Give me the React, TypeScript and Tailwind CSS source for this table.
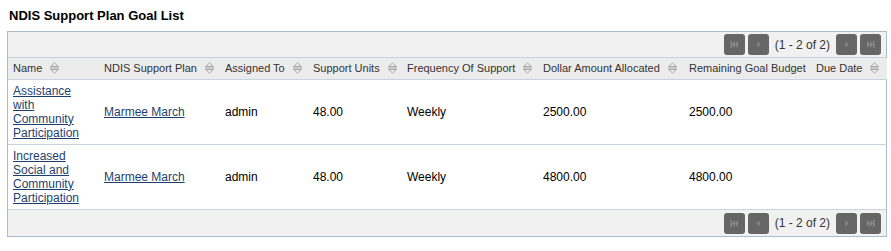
import React from 'react';

const font = { fontFamily: '"Liberation Sans", Arial, sans-serif' };

function SortIcon() {
  return (
    <svg width="11" height="12" viewBox="0 0 11 12" className="shrink-0">
      <path d="M1.5 4.5 L5.5 1 L9.5 4.5 Z" fill="none" stroke="#aaa" strokeWidth="1" />
      <line x1="1" y1="6" x2="10" y2="6" stroke="#aaa" strokeWidth="1" />
      <path d="M1.5 7.5 L5.5 11 L9.5 7.5 Z" fill="none" stroke="#aaa" strokeWidth="1" />
    </svg>
  );
}

function PageBtn({ kind }: { kind: 'first' | 'prev' | 'next' | 'last' }) {
  return (
    <div className="w-[21px] h-[21px] rounded-[3px] bg-[#666666] flex items-center justify-center">
      <svg width="9" height="7" viewBox="0 0 9 7">
        {kind === 'first' && (
          <g fill="#8a8a8a">
            <rect x="0.5" y="0" width="1.5" height="7" />
            <path d="M2 3.5 L5 0 L5 7 Z" />
            <path d="M5 3.5 L8 0 L8 7 Z" />
          </g>
        )}
        {kind === 'prev' && <path d="M2.5 3.5 L5.5 0.5 L5.5 6.5 Z" fill="#8a8a8a" />}
        {kind === 'next' && <path d="M6.5 3.5 L3.5 0.5 L3.5 6.5 Z" fill="#8a8a8a" />}
        {kind === 'last' && (
          <g fill="#8a8a8a">
            <path d="M1 0 L4 3.5 L1 7 Z" />
            <path d="M4 0 L7 3.5 L4 7 Z" />
            <rect x="7" y="0" width="1.5" height="7" />
          </g>
        )}
      </svg>
    </div>
  );
}

function Paginator({ bottom }: { bottom?: boolean }) {
  return (
    <div
      className={`bg-[#f1f1f1] flex items-center justify-end gap-[3px] pr-[5px] ${
        bottom ? 'border-t border-[#c7d3de] h-[27px]' : 'border-b border-[#c7d3de] h-[26px]'
      }`}
    >
      <PageBtn kind="first" />
      <PageBtn kind="prev" />
      <span className="text-[12px] text-[#333] px-[3px]">(1 - 2 of 2)</span>
      <PageBtn kind="next" />
      <PageBtn kind="last" />
    </div>
  );
}

const columns = [
  { label: 'Name', width: 'w-[91px]', sort: true },
  { label: 'NDIS Support Plan', width: 'w-[121px]', sort: true },
  { label: 'Assigned To', width: 'w-[88px]', sort: true },
  { label: 'Support Units', width: 'w-[94px]', sort: true },
  { label: 'Frequency Of Support', width: 'w-[136px]', sort: true },
  { label: 'Dollar Amount Allocated', width: 'w-[146px]', sort: true },
  { label: 'Remaining Goal Budget', width: 'w-[127px]', sort: false },
  { label: 'Due Date', width: 'w-[76px]', sort: true },
];

const rows = [
  {
    name: ['Assistance', 'with', 'Community', 'Participation'],
    amount: '2500.00',
  },
  {
    name: ['Increased', 'Social and', 'Community', 'Participation'],
    amount: '4800.00',
  },
];

export default function App() {
  return (
    <div className="bg-white w-[891px] h-[251px] text-black" style={font}>
      <h1 className="text-[13px] font-bold leading-[16px] pl-[9px] pt-[8px] pb-[7px]">
        NDIS Support Plan Goal List
      </h1>
      <div className="ml-[7px] w-[880px] border border-[#a9bccb]">
        <Paginator />
        <table className="w-full border-collapse table-fixed text-[12px]">
          <thead>
            <tr className="bg-[#ececec] h-[21px] border-b border-[#c7d3de]">
              {columns.map((c) => (
                <th key={c.label} className={`${c.width} font-normal text-left text-[11px] text-[#333] px-[5px] py-0`}>
                  <div className="flex items-center gap-[7px] whitespace-nowrap">
                    <span>{c.label}</span>
                    {c.sort && <SortIcon />}
                  </div>
                </th>
              ))}
            </tr>
          </thead>
          <tbody>
            {rows.map((r, i) => (
              <tr key={i} className={`h-[65px] ${i === 0 ? 'border-b border-[#c7d3de]' : ''}`}>
                <td className="px-[5px] py-[3px] leading-[14px] align-middle">
                  <a href="#" className="underline text-[#1e3f6e]">
                    {r.name.map((n) => (
                      <span key={n} className="block">
                        {n}
                      </span>
                    ))}
                  </a>
                </td>
                <td className="px-[5px]">
                  <a href="#" className="underline text-[#1e3f6e]">
                    Marmee March
                  </a>
                </td>
                <td className="px-[5px]">admin</td>
                <td className="px-[5px]">48.00</td>
                <td className="px-[5px]">Weekly</td>
                <td className="px-[5px]">{r.amount}</td>
                <td className="px-[5px]">{r.amount}</td>
                <td className="px-[5px]"></td>
              </tr>
            ))}
          </tbody>
        </table>
        <Paginator bottom />
      </div>
    </div>
  );
}
